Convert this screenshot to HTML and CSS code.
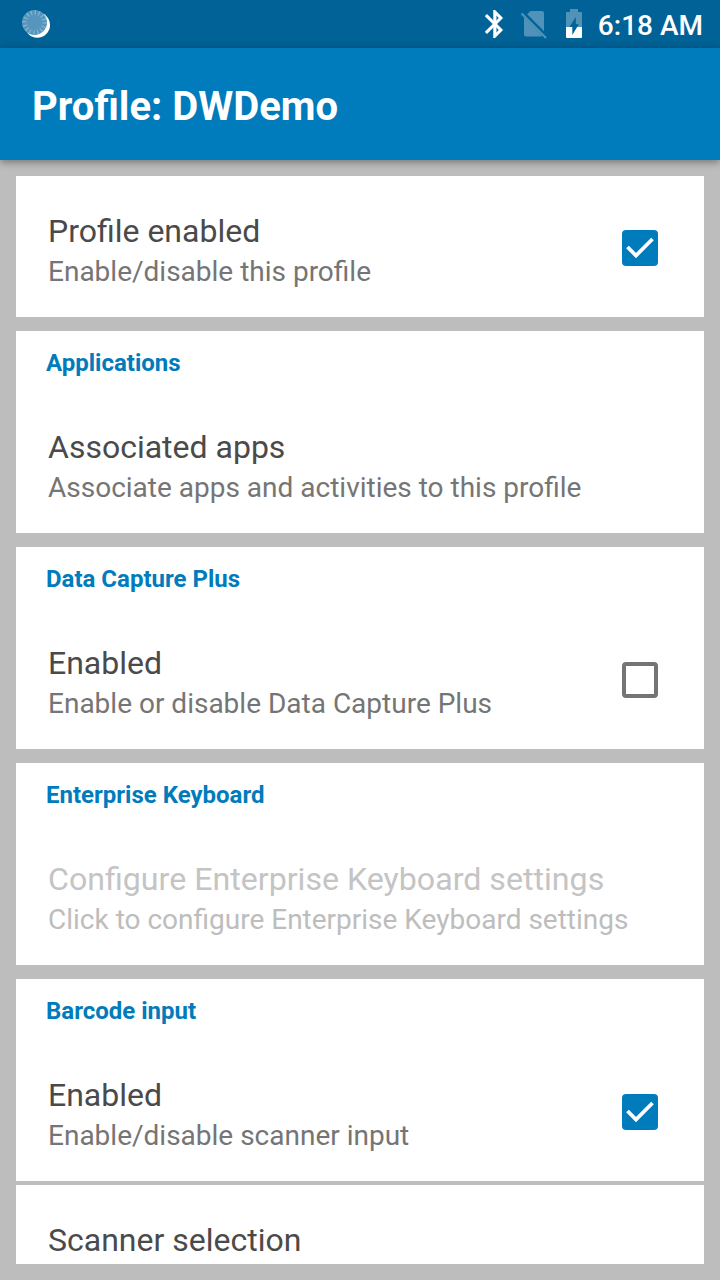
FILE: index.html
```html
<!DOCTYPE html>
<html lang="en">
<head>
<meta charset="utf-8">
<title>Profile: DWDemo</title>
<link rel="stylesheet" href="styles.css">
</head>
<body>
<div class="screen">
  <div class="status-bar">
    <svg class="notification" width="28" height="28" viewBox="0 0 28 28">
      <circle cx="15.300" cy="15" r="12.700" fill="#fff"/>
      <circle cx="12.500" cy="12.500" r="12.500" fill="#5796bc"/>
      <circle cx="12.500" cy="12.500" r="10" fill="none" stroke="#8fbad3" stroke-width="4.500" stroke-dasharray="1 2.927"/>
    </svg>
    <div class="status-icons">
      <svg class="bluetooth" width="18" height="28" viewBox="5 2 12.8 20" preserveAspectRatio="none">
        <path fill="#fff" stroke="#fff" stroke-width=".3" d="M17.71 7.71L12 2h-1v7.59L6.41 5 5 6.41 10.59 12 5 17.59 6.41 19 11 14.41V22h1l5.71-5.71-4.3-4.29 4.3-4.29zM13 5.83l1.88 1.88L13 9.59V5.83zm1.88 10.46L13 18.17v-3.76l1.88 1.88z"/>
      </svg>
      <svg class="sim" width="28" height="30" viewBox="0 0 28 30">
        <path fill="#5092b9" d="M10.500 2H22q2 0 2 2V22.300L7.200 5.300z M4 8.200L22 26.500Q22 27.500 21 27.500H6q-2 0-2-2z"/>
        <path stroke="#5092b9" stroke-width="2.300" d="M1.500 4.500L26 29"/>
      </svg>
      <svg class="battery" width="16" height="30" viewBox="0 0 16 30">
        <path fill="#5092b9" d="M4 0h8v3h3q1 0 1 1v14H0V4q0-1 1-1h3z"/>
        <path fill="#fff" d="M0 18h16v10q0 1-1 1H1q-1 0-1-1z"/>
        <path fill="#006296" d="M9.800 8v7.200H12.800L6.300 26v-8H3.500z"/>
      </svg>
      <span class="clock">6:18 AM</span>
    </div>
  </div>
  <header class="app-bar"><h1>Profile: DWDemo</h1></header>
  <main class="settings">
    <section class="card">
      <div class="row">
        <div class="label"><div class="title">Profile enabled</div><div class="summary">Enable/disable this profile</div></div>
        <svg class="checkbox" width="36" height="36" viewBox="0 0 36 36"><rect width="36" height="36" rx="4" fill="#007bbc"/><path d="M5.500 17L14 25.500L30.500 9" fill="none" stroke="#fff" stroke-width="3.800"/></svg>
      </div>
    </section>
    <section class="card">
      <h2>Applications</h2>
      <div class="row">
        <div class="label"><div class="title">Associated apps</div><div class="summary">Associate apps and activities to this profile</div></div>
      </div>
    </section>
    <section class="card">
      <h2>Data Capture Plus</h2>
      <div class="row">
        <div class="label"><div class="title">Enabled</div><div class="summary">Enable or disable Data Capture Plus</div></div>
        <svg class="checkbox" width="36" height="36" viewBox="0 0 36 36"><rect x="2" y="2" width="32" height="32" rx="2" fill="none" stroke="#757575" stroke-width="4"/></svg>
      </div>
    </section>
    <section class="card">
      <h2>Enterprise Keyboard</h2>
      <div class="row disabled">
        <div class="label"><div class="title">Configure Enterprise Keyboard settings</div><div class="summary">Click to configure Enterprise Keyboard settings</div></div>
      </div>
    </section>
    <section class="card group">
      <h2>Barcode input</h2>
      <div class="row">
        <div class="label"><div class="title">Enabled</div><div class="summary">Enable/disable scanner input</div></div>
        <svg class="checkbox" width="36" height="36" viewBox="0 0 36 36"><rect width="36" height="36" rx="4" fill="#007bbc"/><path d="M5.500 17L14 25.500L30.500 9" fill="none" stroke="#fff" stroke-width="3.800"/></svg>
      </div>
    </section>
    <section class="card last">
      <div class="row"><div class="label"><div class="title">Scanner selection</div></div></div>
    </section>
  </main>
</div>
</body>
</html>
```
FILE: styles.css
```css
* { box-sizing: border-box; }
body { margin: 0; font-family: Roboto, sans-serif; background: #bdbdbd; }
h1, h2 { margin: 0; }
svg { display: block; flex: none; }
.screen { width: 720px; height: 1280px; overflow: hidden; display: flex; flex-direction: column; }
.status-bar {
  height: 48px; flex: none; background: #006296;
  display: flex; justify-content: space-between; align-items: flex-start;
  padding: 9px 17px 0 22px;
}
.notification { margin-top: 1px; }
.status-icons { display: flex; align-items: flex-start; }
.bluetooth { margin-top: 1px; }
.sim { margin-left: 17px; }
.battery { margin-left: 18px; }
.clock {
  margin-left: 16px; height: 34px; line-height: 34px;
  font-size: 28px; font-weight: 500; color: #fff; white-space: nowrap;
}
.app-bar {
  height: 112px; flex: none; padding: 0 32px; background: #007bbc;
  display: flex; align-items: center;
  box-shadow: 0 2px 8px rgba(0, 0, 0, .4);
}
.app-bar h1 { font-size: 40px; line-height: 48px; font-weight: 700; color: #fff; padding-top: 6px; letter-spacing: 0; font-kerning: normal; }
.settings { padding: 16px 16px 0; display: flex; flex-direction: column; gap: 14px; }
.card { background: #fff; }
.card h2 {
  height: 61px; padding: 16px 30px 0;
  font-size: 24px; line-height: 32px; font-weight: 700; color: #007bbc;
}
.row { height: 141px; padding: 34px 46px 0 32px; display: flex; justify-content: space-between; }
.label { white-space: nowrap; }
.title { font-size: 32px; line-height: 42px; color: #4a4a4a; }
.summary { font-size: 28px; line-height: 40px; color: #757575; }
.disabled .title { font-size: 32.15px; color: #c4c4c4; }
.disabled .summary { color: #bdbdbd; }
.checkbox { margin-top: 20px; }
.group { margin-bottom: -10px; }
.last .row { height: 79px; }
```
